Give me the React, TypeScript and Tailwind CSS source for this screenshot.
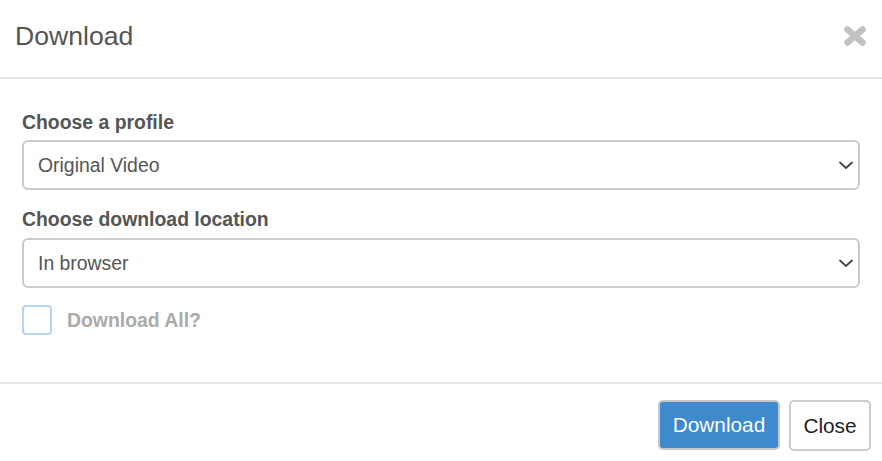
import React from "react";

function Chevron() {
  return (
    <svg width="16" height="9" viewBox="0 0 16 9" className="shrink-0">
      <path d="M2 1.5 L8 7 L14 1.5" fill="none" stroke="#444" strokeWidth="1.8" strokeLinecap="round" strokeLinejoin="round" />
    </svg>
  );
}

function SelectBox({ value }: { value: string }) {
  return (
    <div className="h-[50px] w-full rounded-[6px] border-2 border-[#cbcbcb] bg-white flex items-center justify-between pl-[14px] pr-[4px] text-[#555]">
      <span className="leading-[28px]">{value}</span>
      <Chevron />
    </div>
  );
}

export default function App() {
  return (
    <div
      className="w-[882px] h-[461px] bg-white flex flex-col text-[19.4px] overflow-hidden"
      style={{ fontFamily: '"Liberation Sans", Arial, sans-serif' }}
    >
      {/* Header */}
      <div className="h-[79px] border-b-2 border-[#e5e5e5] flex items-start justify-between pl-[15px] pr-[15px] shrink-0">
        <h4 className="mt-[18px] leading-[37px] text-[26.6px] text-[#555] font-normal">Download</h4>
        <svg width="24" height="22" viewBox="0 0 24 22" className="mt-[25px]">
          <path d="M4.5 4.5 L19.5 17.5 M19.5 4.5 L4.5 17.5" stroke="#c2c2c2" strokeWidth="6.5" strokeLinecap="round" />
        </svg>
      </div>

      {/* Body */}
      <div className="flex-1 px-[22px] pt-[29px] border-b-2 border-[#e5e5e5]">
        <div className="font-bold text-[#555] leading-[28px] mb-[4px]">Choose a profile</div>
        <SelectBox value="Original Video" />
        <div className="font-bold text-[#555] leading-[28px] mt-[15px] mb-[5px]">Choose download location</div>
        <SelectBox value="In browser" />
        <div className="flex items-center mt-[17px] gap-[15px]">
          <div className="w-[30px] h-[30px] rounded-[4px] border-[2.5px] border-[#b8d5ee] bg-white shrink-0" />
          <span className="font-bold text-[#aaaaaa] leading-[28px]">Download All?</span>
        </div>
      </div>

      {/* Footer */}
      <div className="h-[77px] shrink-0 flex items-start justify-end pt-[16px] pr-[11px] gap-[9px] text-[20.8px]">
        <button className="w-[122px] h-[50px] rounded-[5px] border-2 border-[#c4c8cc] bg-[#3e8acc] text-white leading-[28px]">
          Download
        </button>
        <button className="w-[82px] h-[51px] rounded-[5px] border-2 border-[#cccccc] bg-white text-[#222] leading-[28px]">
          Close
        </button>
      </div>
    </div>
  );
}
